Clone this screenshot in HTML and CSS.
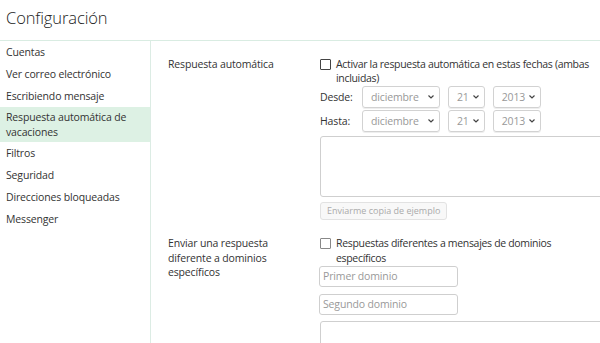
FILE: index.html
```html
<!DOCTYPE html>
<html lang="es">
<head>
<meta charset="utf-8">
<title>Configuración</title>
<link rel="stylesheet" href="styles.css">
</head>
<body>
<div class="header">Configuración</div>
<div class="main">
  <nav class="sidebar">
    <div class="nav-item">Cuentas</div>
    <div class="nav-item">Ver correo electrónico</div>
    <div class="nav-item">Escribiendo mensaje</div>
    <div class="nav-item active">Respuesta automática de vacaciones</div>
    <div class="nav-item">Filtros</div>
    <div class="nav-item">Seguridad</div>
    <div class="nav-item">Direcciones bloqueadas</div>
    <div class="nav-item">Messenger</div>
  </nav>
  <div class="content">
    <div class="section">
      <div class="label">Respuesta automática</div>
      <div class="controls">
        <label class="check">
          <span class="box"></span>
          <span class="check-text">Activar la respuesta automática en estas fechas (ambas incluidas)</span>
        </label>
        <div class="date-row">
          <span class="date-label">Desde:</span>
          <div class="select sel-month"><span>diciembre</span><svg class="chev" width="6" height="4" viewBox="0 0 6 4"><path d="M0.5 0.5 L3 3 L5.5 0.5" fill="none" stroke="#444" stroke-width="1.2"/></svg></div>
          <div class="select"><span>21</span><svg class="chev" width="6" height="4" viewBox="0 0 6 4"><path d="M0.5 0.5 L3 3 L5.5 0.5" fill="none" stroke="#444" stroke-width="1.2"/></svg></div>
          <div class="select"><span>2013</span><svg class="chev" width="6" height="4" viewBox="0 0 6 4"><path d="M0.5 0.5 L3 3 L5.5 0.5" fill="none" stroke="#444" stroke-width="1.2"/></svg></div>
        </div>
        <div class="date-row">
          <span class="date-label">Hasta:</span>
          <div class="select sel-month"><span>diciembre</span><svg class="chev" width="6" height="4" viewBox="0 0 6 4"><path d="M0.5 0.5 L3 3 L5.5 0.5" fill="none" stroke="#444" stroke-width="1.2"/></svg></div>
          <div class="select"><span>21</span><svg class="chev" width="6" height="4" viewBox="0 0 6 4"><path d="M0.5 0.5 L3 3 L5.5 0.5" fill="none" stroke="#444" stroke-width="1.2"/></svg></div>
          <div class="select"><span>2013</span><svg class="chev" width="6" height="4" viewBox="0 0 6 4"><path d="M0.5 0.5 L3 3 L5.5 0.5" fill="none" stroke="#444" stroke-width="1.2"/></svg></div>
        </div>
        <div class="textarea ta1"></div>
        <div class="button">Enviarme copia de ejemplo</div>
      </div>
    </div>
    <div class="section second">
      <div class="label">Enviar una respuesta diferente a dominios específicos</div>
      <div class="controls">
        <label class="check">
          <span class="box light"></span>
          <span class="check-text">Respuestas diferentes a mensajes de dominios específicos</span>
        </label>
        <div class="input">Primer dominio</div>
        <div class="input">Segundo dominio</div>
        <div class="textarea ta2"></div>
      </div>
    </div>
  </div>
</div>
</body>
</html>
```
FILE: styles.css
```css
html, body {
  margin: 0;
  padding: 0;
  overflow: hidden;
  height: 343px;
}
body {
  font-family: "Open Sans", "Noto Sans", sans-serif;
  font-size: 10.5px;
  letter-spacing: -0.15px;
  color: #333;
  background: #fff;
}
.header {
  height: 40px;
  line-height: 36px;
  padding-left: 6px;
  font-size: 16.5px;
  font-weight: 300;
  letter-spacing: -0.1px;
  color: #222;
  border-bottom: 1px solid #d9ece2;
}
.main {
  display: flex;
  height: 302px;
  overflow: hidden;
}
.sidebar {
  width: 150px;
  flex: none;
  border-right: 1px solid #dcece4;
}
.nav-item {
  height: 22px;
  line-height: 22px;
  padding: 0 6px;
  color: #333;
}
.nav-item.active {
  height: auto;
  line-height: 15px;
  padding: 3px 6px 2px;
  background: #ddf1e4;
}
.content {
  flex: 1;
  padding: 16px 0 0 17px;
  min-width: 0;
  overflow: hidden;
}
.section {
  display: flex;
}
.section.second {
  margin-top: 16px;
}
.label {
  width: 152px;
  flex: none;
  line-height: 15px;
  padding-right: 20px;
  box-sizing: border-box;
}
.section.second .label {
  padding-right: 30px;
  line-height: 14.5px;
}
.controls {
  width: 280px;
  flex: none;
  display: flex;
  flex-direction: column;
  align-items: flex-start;
}
.check {
  display: flex;
  align-items: flex-start;
  line-height: 14px;
}
.section.second .check {
  line-height: 15px;
}
.box {
  width: 9px;
  height: 9px;
  border: 1px solid #444;
  border-radius: 1px;
  margin-top: 2px;
  margin-right: 5px;
  flex: none;
}
.box.light {
  border-color: #888;
}
.check-text {
  color: #333;
  letter-spacing: -0.32px;
}
.date-row {
  display: flex;
  align-items: center;
  margin-top: 2px;
}
.check + .date-row {
  margin-top: 1px;
}
.date-label {
  width: 42px;
  flex: none;
}
.select {
  height: 20px;
  border: 1px solid #d2d2d2;
  border-radius: 3px;
  display: flex;
  align-items: center;
  gap: 4px;
  color: #999;
  padding: 0 5px 0 8px;
  margin-right: 8px;
  box-shadow: 0 1px 0 #eee;
}
.sel-month {
  width: 63px;
  justify-content: space-between;
}
.chev {
  display: block;
}
.textarea {
  border: 1px solid #cfcfcf;
  border-radius: 3px;
  width: 320px;
  flex: none;
}
.ta1 {
  height: 59px;
  margin-top: 4px;
}
.ta2 {
  height: 40px;
  margin-top: 6px;
}
.button {
  margin-top: 5px;
  height: 16px;
  line-height: 16px;
  padding: 0 6px;
  border: 1px solid #e2e2e2;
  border-radius: 3px;
  background: #f8f8f8;
  color: #aaa;
  font-size: 9px;
  letter-spacing: 0;
}
.input {
  width: 134px;
  height: 19px;
  line-height: 19px;
  border: 1px solid #cfcfcf;
  border-radius: 3px;
  padding-left: 3px;
  color: #999;
  margin-left: -1px;
}
.input + .input {
  margin-top: 7px;
}
```
